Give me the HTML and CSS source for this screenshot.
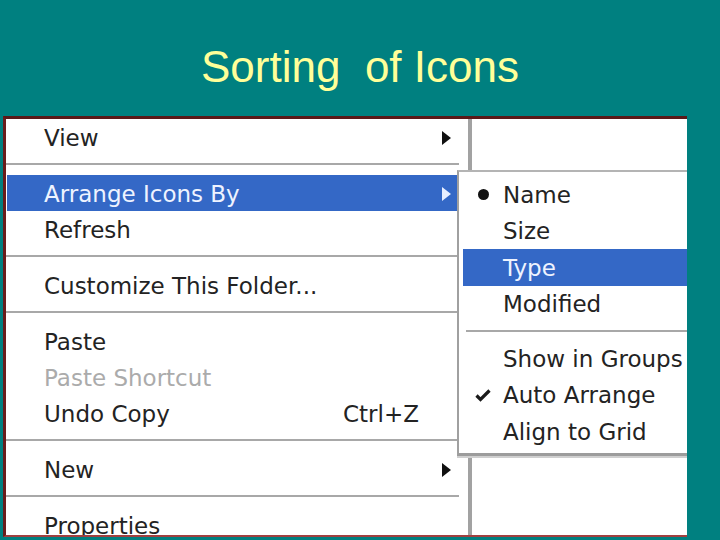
FILE: index.html
```html
<!DOCTYPE html>
<html lang="en">
<head>
<meta charset="utf-8">
<title>Sorting of Icons</title>
<link rel="stylesheet" href="styles.css">
</head>
<body>
<header class="slide-title">Sorting&nbsp; of Icons</header>
<section class="shot">
  <ul class="menu">
    <li class="item has-sub"><span class="label">View</span><span class="arrow"></span></li>
    <li class="sep"></li>
    <li class="item has-sub active"><span class="label">Arrange Icons By</span><span class="arrow"></span></li>
    <li class="item"><span class="label">Refresh</span></li>
    <li class="sep"></li>
    <li class="item"><span class="label">Customize This Folder...</span></li>
    <li class="sep"></li>
    <li class="item"><span class="label">Paste</span></li>
    <li class="item disabled"><span class="label">Paste Shortcut</span></li>
    <li class="item"><span class="label">Undo Copy</span><span class="key">Ctrl+Z</span></li>
    <li class="sep"></li>
    <li class="item has-sub"><span class="label">New</span><span class="arrow"></span></li>
    <li class="sep"></li>
    <li class="item"><span class="label">Properties</span></li>
  </ul>
  <div class="desktop"></div>
  <ul class="submenu">
    <li class="sub-item"><span class="mark"><span class="bullet"></span></span><span>Name</span></li>
    <li class="sub-item"><span class="mark"></span><span>Size</span></li>
    <li class="sub-item active"><span class="mark"></span><span>Type</span></li>
    <li class="sub-item"><span class="mark"></span><span>Modified</span></li>
    <li class="sub-sep"></li>
    <li class="sub-item"><span class="mark"></span><span>Show in Groups</span></li>
    <li class="sub-item"><span class="mark"><svg class="check" viewBox="0 0 16 14" width="16" height="14"><path d="M1.5 7.5 L5.5 11.5 L14.5 2.5" fill="none" stroke="#1a1a1a" stroke-width="3.2"/></svg></span><span>Auto Arrange</span></li>
    <li class="sub-item"><span class="mark"></span><span>Align to Grid</span></li>
  </ul>
</section>
</body>
</html>
```

FILE: styles.css
```css
* { box-sizing: border-box; }
html, body { margin: 0; padding: 0; }
body {
  width: 720px;
  height: 540px;
  overflow: hidden;
  background: #008080;
  font-family: "DejaVu Sans", Verdana, sans-serif;
}
.slide-title {
  height: 116px;
  padding-top: 42px;
  font-family: "Liberation Sans", Arial, sans-serif;
  font-size: 44px;
  line-height: 50px;
  color: #ffff99;
  text-align: center;
}
.shot {
  position: relative;
  margin-left: 3px;
  width: 684px;
  height: 421px;
  border-top: 3px solid #5a1818;
  border-left: 3px solid #6a1c1c;
  border-bottom: 2px solid #a04040;
  background: #ffffff;
  overflow: hidden;
  display: flex;
}
.menu {
  list-style: none;
  margin: 0;
  padding: 0;
  width: 466px;
  flex: none;
  background: #ffffff;
  border-right: 4px solid #a2a2a2;
  box-shadow: 3px 0 0 #d4d4d4;
}
.desktop { flex: 1; background: #ffffff; }
.item {
  display: flex;
  align-items: center;
  height: 36px;
  margin: 0 1px;
  padding: 1px 16px 0 37px;
  font-size: 23px;
  color: #232323;
}
.item .label { width: 299px; white-space: nowrap; }
.item .key { white-space: nowrap; }
.item.active { background: #3468c6; color: #eef3ff; }
.item.disabled { color: #ababab; }
.arrow {
  margin-left: auto;
  width: 0;
  height: 0;
  border-left: 9px solid #111111;
  border-top: 7px solid transparent;
  border-bottom: 7px solid transparent;
}
.item.active .arrow { border-left-color: #e8efff; }
.sep {
  height: 20px;
  padding-top: 8px;
}
.sep::before {
  content: "";
  display: block;
  height: 2px;
  margin-right: 9px;
  background: #a8a8a8;
}
.submenu {
  position: absolute;
  left: 451px;
  top: 51px;
  width: 240px;
  list-style: none;
  margin: 0;
  padding: 4px 0 3px 0;
  background: #ffffff;
  border-left: 2px solid #a0a0a0;
  border-top: 2px solid #b4b4b4;
  border-bottom: 3px solid #9c9c9c;
  box-shadow: 0 2px 0 #cfcfcf;
}
.sub-item {
  display: flex;
  align-items: center;
  height: 36.5px;
  margin-left: 4px;
  padding-top: 1px;
  font-size: 23px;
  color: #232323;
  white-space: nowrap;
}
.sub-item.active { background: #3468c6; color: #eef3ff; }
.mark {
  width: 40px;
  height: 20px;
  flex: none;
  display: flex;
  align-items: center;
  justify-content: center;
}
.bullet {
  width: 11px;
  height: 11px;
  border-radius: 50%;
  background: #111111;
}
.check { display: block; }
.sub-sep {
  height: 18px;
  padding-top: 8px;
  margin-left: 7px;
}
.sub-sep::before {
  content: "";
  display: block;
  height: 2px;
  background: #a8a8a8;
}
```
